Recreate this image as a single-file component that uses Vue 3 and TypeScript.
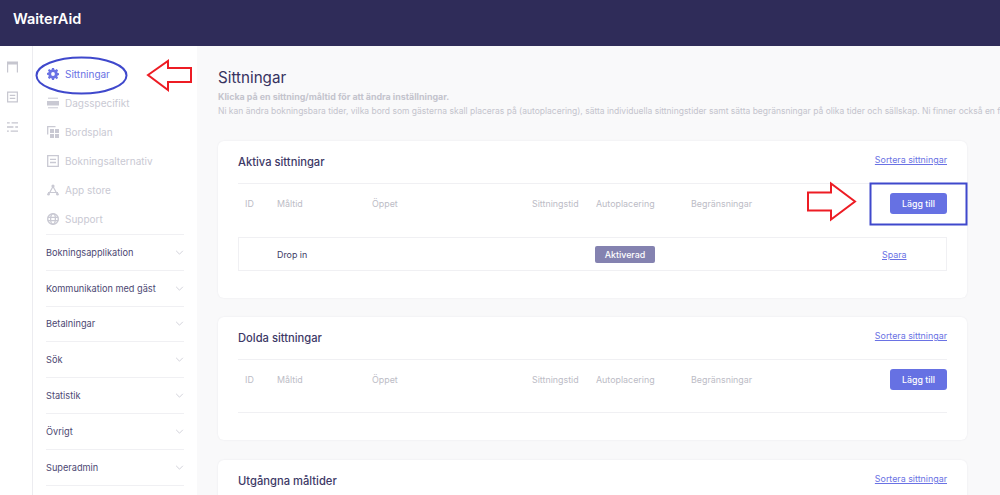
<script setup lang="ts">
const menu = [
  { label: 'Sittningar', icon: 'gear', active: true },
  { label: 'Dagsspecifikt', icon: 'day' },
  { label: 'Bordsplan', icon: 'plan' },
  { label: 'Bokningsalternativ', icon: 'form' },
  { label: 'App store', icon: 'apps' },
  { label: 'Support', icon: 'globe' },
]
const groups = ['Bokningsapplikation', 'Kommunikation med gäst', 'Betalningar', 'Sök', 'Statistik', 'Övrigt', 'Superadmin']
const columns = ['ID', 'Måltid', 'Öppet', 'Sittningstid', 'Autoplacering', 'Begränsningar']
</script>

<template>
  <div class="page">
    <header class="topbar">WaiterAid</header>
    <div class="body">
      <nav class="rail">
        <svg viewBox="0 0 12 12" class="rail-icon"><path d="M0 0h12v12h-1.300V3.200H1.300V12H0z" fill="#c6c6cf" /></svg>
        <svg viewBox="0 0 12 12" class="rail-icon"><path d="M.7.7h10.600v10.600H.7zM3 4.200h6M3 7.500h6" fill="none" stroke="#c6c6cf" stroke-width="1.300" /></svg>
        <svg viewBox="0 0 12 12" class="rail-icon"><path d="M0 1.500h3M5 1.500h7M0 6h7M9 6h3M0 10.500h2M4 10.500h8" fill="none" stroke="#c6c6cf" stroke-width="1.400" /></svg>
      </nav>

      <aside class="sidebar">
        <ul class="menu">
          <li v-for="item in menu" :key="item.label" class="menu-item" :class="{ active: item.active }">
            <svg viewBox="0 0 12 12" class="menu-icon">
              <template v-if="item.icon === 'gear'">
                <path d="M5 0h2l.3 1.600 1 .4L9.700 1.100l1.400 1.500-.9 1.300.4 1L12 5.200v1.900l-1.400.3-.4 1 .9 1.300-1.400 1.500L8.300 10l-1 .4L7 12H5l-.3-1.600-1-.4-1.400.9L.9 9.400l.9-1.300-.4-1L0 6.800V4.900l1.400-.3.4-1-.9-1.300L2.300 1l1.400.9 1-.4z" fill="currentColor" />
                <circle cx="6" cy="6" r="1.900" fill="#fff" />
              </template>
              <path v-else-if="item.icon === 'day'" d="M1 1.200h10M0 4.500h12v3.500H0zM1 10.800h10" fill="currentColor" stroke="currentColor" stroke-width="1" />
              <template v-else-if="item.icon === 'plan'">
                <path d="M.7 8.500V.7H8.500" fill="none" stroke="currentColor" stroke-width="1.300" />
                <path d="M3 3h9v9H3z" fill="currentColor" />
                <path d="M7.500 3v9M3 7.500h9" stroke="#fff" stroke-width="1" />
              </template>
              <path v-else-if="item.icon === 'form'" d="M.7.7h10.600v10.600H.7zM3 4.300h6M3 7.500h6" fill="none" stroke="currentColor" stroke-width="1.300" />
              <template v-else-if="item.icon === 'apps'">
                <path d="M6 2.500 2 9.800M6 2.500l4 7.300M1 8.500h10" fill="none" stroke="currentColor" stroke-width="1.200" />
                <circle cx="6" cy="2" r="1.600" fill="currentColor" />
                <circle cx="1.500" cy="10.300" r="1.300" fill="currentColor" />
                <circle cx="10.500" cy="10.300" r="1.300" fill="currentColor" />
              </template>
              <template v-else>
                <circle cx="6" cy="6" r="5.300" fill="none" stroke="currentColor" stroke-width="1.400" />
                <ellipse cx="6" cy="6" rx="2.400" ry="5.300" fill="none" stroke="currentColor" stroke-width="1.300" />
                <path d="M.7 4.300h10.600M.7 7.700h10.600" stroke="currentColor" stroke-width="1.300" />
              </template>
            </svg>
            {{ item.label }}
          </li>
        </ul>
        <div v-for="group in groups" :key="group" class="group">
          <span>{{ group }}</span>
          <svg viewBox="0 0 10 6" class="chevron"><path d="M1 1l4 4 4-4" fill="none" stroke="#c9c9d2" stroke-width="1" /></svg>
        </div>
      </aside>

      <main class="main">
        <h1>Sittningar</h1>
        <p class="lead"><b>Klicka på en sittning/måltid för att ändra inställningar.</b></p>
        <p class="lead nowrap">Ni kan ändra bokningsbara tider, vilka bord som gästerna skall placeras på (autoplacering), sätta individuella sittningstider samt sätta begränsningar på olika tider och sällskap. Ni finner också en flik för dolda sittningar.</p>

        <section class="card first">
          <div class="card-head"><h2>Aktiva sittningar</h2><a>Sortera sittningar</a></div>
          <div class="cols">
            <span v-for="c in columns" :key="c">{{ c }}</span>
            <button>Lägg till</button>
          </div>
          <div class="row">
            <span class="row-name">Drop in</span>
            <span class="badge">Aktiverad</span>
            <a class="save">Spara</a>
          </div>
        </section>

        <section class="card second">
          <div class="card-head"><h2>Dolda sittningar</h2><a>Sortera sittningar</a></div>
          <div class="cols underlined">
            <span v-for="c in columns" :key="c">{{ c }}</span>
            <button>Lägg till</button>
          </div>
        </section>

        <section class="card">
          <div class="card-head"><h2>Utgångna måltider</h2><a>Sortera sittningar</a></div>
        </section>
      </main>
    </div>

    <!-- annotations drawn on top of the screenshot -->
    <svg class="marks" viewBox="0 0 1000 495">
      <ellipse cx="81.500" cy="75.500" rx="45" ry="18" fill="none" stroke="#3f48cc" stroke-width="2" />
      <path d="M148 75l20-14v7h23v14h-23v8z" fill="none" stroke="#ed1c24" stroke-width="2" />
      <path d="M808 192.500h23v-9l24 18-24 18v-9h-23z" fill="none" stroke="#ed1c24" stroke-width="2" />
      <rect x="870.500" y="183.500" width="96" height="41" fill="none" stroke="#3f48cc" stroke-width="2" />
    </svg>
  </div>
</template>

<style>
html, body {
  margin: 0;
  overflow: hidden;
}
</style>

<style scoped>
.page {
  position: relative;
  width: 1000px;
  height: 495px;
  overflow: hidden;
  font-family: Inter, "Liberation Sans", sans-serif;
  font-size: 8.900px;
  color: #403c66;
  background: #f9f9fa;
}

.topbar {
  height: 46px;
  box-sizing: border-box;
  padding: 0 13px 9px;
  display: flex;
  align-items: center;
  background: #2f2c59;
  color: #fff;
  font-size: 14.500px;
  font-weight: 600;
}

.body {
  display: flex;
  height: 449px;
}

.rail {
  width: 33px;
  flex: none;
  box-sizing: border-box;
  padding: 15px 7px 0 0;
  display: flex;
  flex-direction: column;
  gap: 18px;
  align-items: center;
  background: #fff;
  border-right: 1px solid #ececf0;
}

.rail-icon {
  width: 11px;
  height: 12px;
}

.sidebar {
  width: 164px;
  flex: none;
  box-sizing: border-box;
  padding: 13px 13px 0;
  background: #fff;
}

.menu {
  list-style: none;
  margin: 0;
  padding: 0 0 1px 1px;
  border-bottom: 1px solid #f0f0f3;
}

.menu-item {
  height: 29px;
  display: flex;
  align-items: center;
  gap: 6px;
  font-size: 10px;
  color: #c9c9d3;
  white-space: nowrap;
}

.menu-item.active {
  color: #6a72e4;
}

.menu-icon {
  width: 12px;
  height: 12px;
  flex: none;
}

.group {
  height: 35.800px;
  box-sizing: border-box;
  display: flex;
  align-items: center;
  justify-content: space-between;
  font-size: 9.200px;
  color: #4c4872;
  border-bottom: 1px solid #f0f0f3;
}

.chevron {
  width: 9px;
  height: 5px;
}

.main {
  flex: 1;
  min-width: 0;
  padding: 22px 34px 0 21px;
}

h1 {
  margin: 0 0 2px;
  font-size: 15.200px;
  line-height: 20px;
  font-weight: 400;
  color: #37335f;
}

.lead {
  margin: 0;
  line-height: 14px;
  font-size: 8.500px;
  color: #c4c4cd;
}

.lead b {
  font-size: 8.900px;
}

.nowrap {
  white-space: nowrap;
}

.card {
  box-sizing: border-box;
  width: 749px;
  padding: 0 20px;
  margin-bottom: 19px;
  background: #fff;
  border-radius: 6px;
  box-shadow: 0 0 2px rgba(40, 40, 80, 0.08);
}

.first {
  height: 157px;
  margin-top: 23px;
}

.second {
  height: 123px;
  margin-bottom: 20px;
}

.card-head {
  height: 42px;
  display: flex;
  align-items: center;
  justify-content: space-between;
  border-bottom: 1px solid #f0f0f3;
}

h2 {
  margin: 0;
  font-size: 11.200px;
  font-weight: 500;
  color: #3d3966;
}

.card-head a {
  align-self: flex-start;
  margin-top: 13px;
  color: #6a72e4;
  text-decoration: underline;
}

.cols {
  display: grid;
  grid-template-columns: 32px 95px 160px 64px 95px 1fr 57px;
  align-items: center;
  height: 53px;
  padding: 0 0 14px 7px;
  color: #bcbcc6;
  box-sizing: border-box;
}

.underlined {
  border-bottom: 1px solid #f0f0f3;
}

button {
  height: 21px;
  padding: 0;
  border: 0;
  border-radius: 3px;
  background: #6671e3;
  color: #fff;
  font: 500 8.800px Inter, "Liberation Sans", sans-serif;
}

.row {
  height: 34px;
  box-sizing: border-box;
  display: flex;
  align-items: center;
  border: 1px solid #f0f0f3;
}

.row-name {
  margin-left: 38px;
  width: 318px;
}

.badge {
  width: 60px;
  height: 17px;
  display: flex;
  align-items: center;
  justify-content: center;
  border-radius: 2px;
  background: #8482b0;
  color: #fff;
  font-weight: 500;
}

.save {
  margin-left: 227px;
  color: #6a72e4;
  text-decoration: underline;
}

.marks {
  position: absolute;
  inset: 0;
  width: 1000px;
  height: 495px;
  pointer-events: none;
}
</style>
